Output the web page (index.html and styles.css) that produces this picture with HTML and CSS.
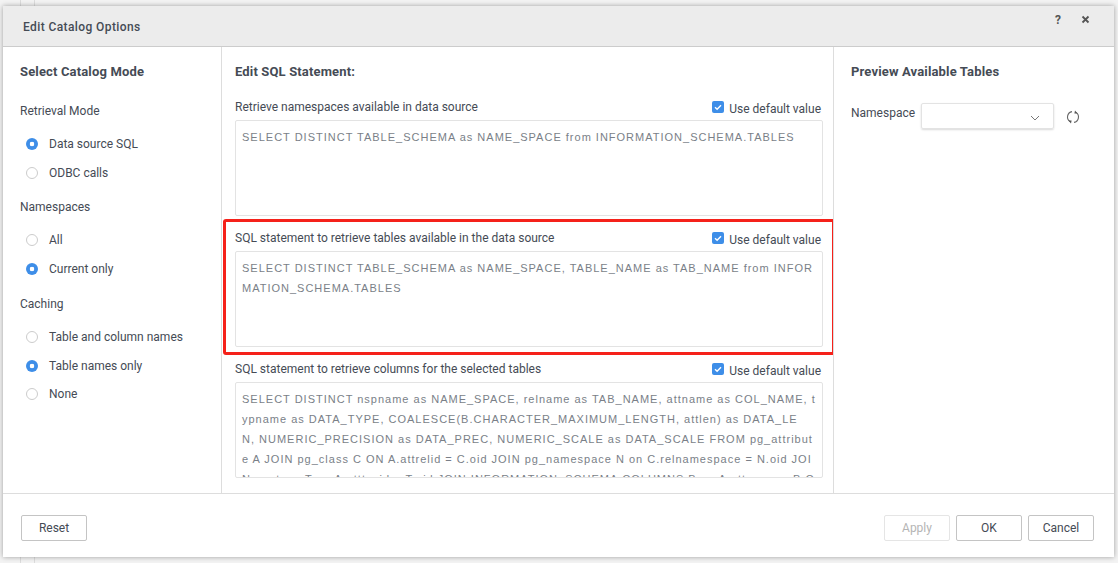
FILE: index.html
```html
<!DOCTYPE html>
<html lang="en">
<head>
<meta charset="utf-8">
<title>Edit Catalog Options</title>
<link rel="stylesheet" href="styles.css">
</head>
<body>
<div class="backdrop"><span class="bg-line one"></span><span class="bg-line two"></span></div>
<div class="dialog">
  <header class="dialog-head">
    <h1 class="dialog-title">Edit Catalog Options</h1>
    <div class="head-actions"><span class="help">?</span>
      <svg class="close" width="9" height="9" viewBox="0 0 9 9"><path d="M1.5 1.5l6 6M7.5 1.5l-6 6" stroke="#555" stroke-width="1.8" fill="none"/></svg>
    </div>
  </header>
  <main class="dialog-body">
    <section class="col col-left">
      <h2 class="col-title">Select Catalog Mode</h2>
      <div class="group-label first">Retrieval Mode</div>
      <div class="radio on"><i></i>Data source SQL</div>
      <div class="radio"><i></i>ODBC calls</div>
      <div class="group-label second">Namespaces</div>
      <div class="radio"><i></i>All</div>
      <div class="radio on"><i></i>Current only</div>
      <div class="group-label third">Caching</div>
      <div class="radio"><i></i>Table and column names</div>
      <div class="radio on"><i></i>Table names only</div>
      <div class="radio last"><i></i>None</div>
    </section>
    <section class="col col-mid">
      <h2 class="col-title">Edit SQL Statement:</h2>
      <div class="field field-first">
        <div class="field-head"><span>Retrieve namespaces available in data source</span>
          <label class="check"><svg width="12" height="12" viewBox="0 0 12 12"><rect width="12" height="12" rx="2" fill="#3e8ee8"/><path d="M3 6.2l2.1 2L9 4.2" stroke="#fff" stroke-width="1.4" fill="none"/></svg>Use default value</label></div>
        <div class="sql">SELECT DISTINCT TABLE_SCHEMA as NAME_SPACE from INFORMATION_SCHEMA.TABLES</div>
      </div>
      <div class="field">
        <div class="field-head"><span>SQL statement to retrieve tables available in the data source</span>
          <label class="check"><svg width="12" height="12" viewBox="0 0 12 12"><rect width="12" height="12" rx="2" fill="#3e8ee8"/><path d="M3 6.2l2.1 2L9 4.2" stroke="#fff" stroke-width="1.4" fill="none"/></svg>Use default value</label></div>
        <div class="sql">SELECT DISTINCT TABLE_SCHEMA as NAME_SPACE, TABLE_NAME as TAB_NAME from INFORMATION_SCHEMA.TABLES</div>
        <div class="highlight"></div>
      </div>
      <div class="field">
        <div class="field-head"><span>SQL statement to retrieve columns for the selected tables</span>
          <label class="check"><svg width="12" height="12" viewBox="0 0 12 12"><rect width="12" height="12" rx="2" fill="#3e8ee8"/><path d="M3 6.2l2.1 2L9 4.2" stroke="#fff" stroke-width="1.4" fill="none"/></svg>Use default value</label></div>
        <div class="sql">SELECT DISTINCT nspname as NAME_SPACE, relname as TAB_NAME, attname as COL_NAME, typname as DATA_TYPE, COALESCE(B.CHARACTER_MAXIMUM_LENGTH, attlen) as DATA_LEN,&nbsp;NUMERIC_PRECISION as DATA_PREC, NUMERIC_SCALE as DATA_SCALE FROM pg_attribute A JOIN pg_class C ON A.attrelid = C.oid JOIN pg_namespace N on C.relnamespace = N.oid JOIN pg_type T on A.atttypid = T.oid JOIN INFORMATION_SCHEMA.COLUMNS B on A.attname = B.COLUMN_NAME</div>
      </div>
    </section>
    <section class="col col-right">
      <h2 class="col-title">Preview Available Tables</h2>
      <div class="ns-row">
        <span class="ns-label">Namespace</span>
        <div class="select"><svg width="10" height="6" viewBox="0 0 10 6"><path d="M1 1l4 4 4-4" stroke="#777" fill="none"/></svg></div>
        <svg class="refresh" width="14" height="14" viewBox="0 0 14 14"><path d="M6 1.6A5.5 5.5 0 0 0 4 11.6M8 12.4A5.5 5.5 0 0 0 10 2.4" stroke="#666" stroke-width="1.1" fill="none"/><path d="M2.4 10.4l3.2.2-.6 3zM11.6 3.6l-3.2-.2.6-3z" fill="#555"/></svg>
      </div>
    </section>
  </main>
  <footer class="dialog-foot">
    <button class="btn">Reset</button>
    <div class="foot-right">
      <button class="btn disabled">Apply</button>
      <button class="btn">OK</button>
      <button class="btn">Cancel</button>
    </div>
  </footer>
</div>
</body>
</html>
```
FILE: styles.css
```css
* { box-sizing: border-box; }
html, body { margin: 0; height: 100%; }
body {
  width: 1118px; height: 563px; overflow: hidden; background: #f3f3f3;
  font-family: Roboto, sans-serif; font-size: 12px; color: #454b55;
  padding: 6px 4px 6px 3px; position: relative;
}
.backdrop { position: absolute; inset: 0; }
.bg-line { position: absolute; top: 0; bottom: 0; width: 1px; background: #dcdcdc; }
.bg-line.one { left: 20px; }
.bg-line.two { left: 34px; }
.dialog {
  position: relative; height: 551px; background: #fff; display: flex; flex-direction: column;
  box-shadow: 0 0 5px rgba(0,0,0,.35);
}
.dialog-head {
  height: 41px; flex: none; background: #ececec; border-bottom: 1px solid #ccc;
  display: flex; align-items: center; justify-content: space-between; padding: 0 24px 0 20px;
}
.dialog-title { margin: 1px 0 0; font-size: 12px; font-weight: 500; color: #454b55; line-height: 18px; letter-spacing: .4px; }
.head-actions { display: flex; align-items: center; gap: 20px; margin-top: -13px; }
.help { font-weight: 700; font-size: 12px; color: #555; line-height: 14px; }
.dialog-body { flex: 1; display: flex; min-height: 0; border-bottom: 1px solid #ddd; }
.col { padding-top: 16px; overflow: hidden; }
.col-left { width: 219px; flex: none; border-right: 1px solid #ddd; padding-left: 17px; }
.col-mid { width: 612px; flex: none; border-right: 1px solid #ddd; padding: 16px 10px 0 13px; position: relative; }
.col-right { flex: 1; padding-left: 17px; }
.col-title { margin: 0; font-size: 13px; font-weight: 700; line-height: 18px; color: #454b55; letter-spacing: .15px; }
.group-label { line-height: 18px; }
.group-label.first { margin-top: 21px; margin-bottom: 9px; }
.group-label.second { margin-top: 11px; margin-bottom: 9px; }
.group-label.third { margin-top: 12px; margin-bottom: 9px; }
.radio { display: flex; align-items: center; height: 29px; line-height: 18px; padding-left: 6px; }
.radio.last { height: 28px; }
.radio i {
  width: 12px; height: 12px; border-radius: 50%; border: 1px solid #ccc; margin-right: 11px; flex: none; background: #fff;
}
.radio.on i { border: 0; background: radial-gradient(circle, #fff 0 2px, #3e8ee8 2.6px); }
.field-first { margin-top: 17px; }
.field { position: relative; margin-bottom: 13px; }
.field-head { display: flex; justify-content: space-between; align-items: flex-start; height: 22px; padding-right: 2px; line-height: 18px; }
.check { display: flex; align-items: center; gap: 6px; height: 18px; margin-top: 2px; }
.check svg { margin-top: -4px; margin-right: -1px; }
.sql {
  height: 96px; border: 1px solid #e3e3e3; border-radius: 2px; padding: 6px; overflow: hidden;
  font-family: "Liberation Sans", sans-serif; font-size: 11px; letter-spacing: 1px; line-height: 20px;
  color: #7a7f88; word-break: break-all;
}
.highlight {
  position: absolute; left: -12px; right: -12px; top: -10px; bottom: -8px;
  border: 3px solid #f5211a; border-radius: 3px;
}
.ns-row { display: flex; align-items: center; margin-top: 22px; }
.ns-label { width: 70px; flex: none; margin-top: -6px; }
.select {
  width: 133px; height: 26px; border: 1px solid #e3e3e3; border-radius: 2px;
  box-shadow: 0 1px 2px rgba(0,0,0,.15); display: flex; align-items: center; justify-content: flex-end; padding-right: 13px;
}
.select svg { margin-top: 3px; }
.refresh { margin-left: 12px; margin-top: 1px; }
.dialog-foot {
  height: 63px; flex: none; display: flex; justify-content: space-between; align-items: flex-start; padding: 21px 20px 0 18px;
}
.foot-right { display: flex; gap: 6px; }
.btn {
  width: 66px; height: 26px; background: #fff; border: 1px solid #c4c4c4; border-radius: 2px; padding: 0;
  font-family: Roboto, sans-serif; font-size: 12px; color: #454b55;
}
.btn.disabled { border-color: #e5e5e5; color: #b5b5b5; }
```
